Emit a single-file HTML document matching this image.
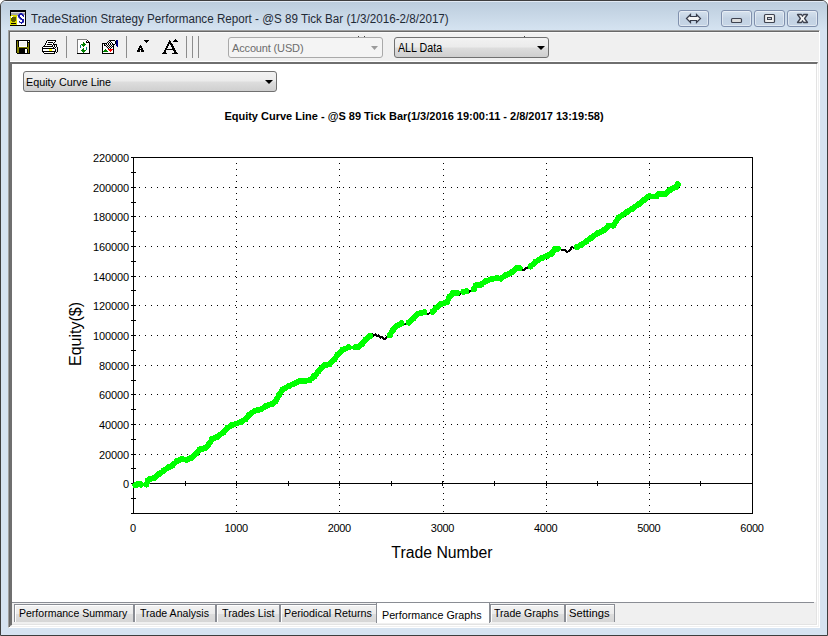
<!DOCTYPE html>
<html><head><meta charset="utf-8"><style>
*{margin:0;padding:0;box-sizing:border-box}
html,body{width:828px;height:636px;overflow:hidden;background:#fff}
body{position:relative;font-family:"Liberation Sans",sans-serif}
.abs{position:absolute}
#frame{position:absolute;left:0;top:0;width:828px;height:636px;background:#d6e3f1;border:1px solid #3e3e3e;border-radius:6px 6px 0 0}
#titlegrad{position:absolute;left:1px;top:1px;width:826px;height:29px;border-radius:5px 5px 0 0;background:linear-gradient(#e2eaf4 0px,#e2eaf4 1px,#bccddd 1px,#d5e3f1 29px)}
#title{position:absolute;left:31px;top:12px;font-size:12px;color:#1f2a36;white-space:nowrap;transform:scaleX(0.97);transform-origin:0 0}
.wb{position:absolute;top:10px;height:17px;width:31px;border:1px solid #8090ad;border-radius:3px;background:linear-gradient(#d6e2ee,#c3d2e3 50%,#c6d5e6);box-shadow:inset 0 0 0 1px rgba(255,255,255,0.45)}
#client{position:absolute;left:8px;top:30px;width:812px;height:598px;background:#f0f0f0;border-top:1px solid #a0a0a0;border-left:1px solid #a0a0a0;border-right:1px solid #fff;border-bottom:1px solid #fff;box-shadow:inset 1px 1px 0 #696969}
#tb{position:absolute;left:10px;top:32px;width:808px;height:30px;background:#f0f0f0;border-bottom:1px solid #fff;border-top:1px solid #fafafa}
.sep{position:absolute;top:36px;width:1px;height:22px;background:#8c8c8c}
.cb{position:absolute;height:21px;border:1px solid #707070;border-radius:3px}
.cb span{position:absolute;white-space:nowrap}
#panel{position:absolute;left:10px;top:62px;width:808px;height:564px;background:#f0f0f0;border-top:2px solid #6f6f6f;border-left:2px solid #6f6f6f;border-right:1px solid #fff;border-bottom:1px solid #fff;box-shadow:inset -1px -1px 0 #e3e3e3}
#content{position:absolute;left:12px;top:64px;width:804px;height:538px;background:#fff}
#tabline{position:absolute;left:12px;top:602px;width:802px;height:1px;background:#8a8d94}
.tab{position:absolute;top:604px;height:18px;border:1px solid #8a8d94;border-bottom:none;background:linear-gradient(#f2f2f2 0,#ebebeb 9px,#dddddd 9px,#d5d5d5 18px);box-shadow:inset 1px 1px 0 #fff}
.tab span{position:absolute;top:2px;font-size:11.5px;color:#000;white-space:nowrap;transform-origin:0 0}
.tab.act{top:602px;height:21px;background:#fff;z-index:2}
.tab.act span{top:6px}
.yl{position:absolute;left:60px;width:69px;text-align:right;font-size:11px;letter-spacing:-0.1px;color:#000;line-height:14px}
.xl{position:absolute;top:521px;width:60px;text-align:center;font-size:11px;letter-spacing:-0.3px;color:#000;line-height:14px}
</style></head><body>
<div id="frame"></div>
<div id="titlegrad"></div>
<svg class="abs" style="left:0;top:0" width="30" height="30"><rect x="10" y="10" width="16" height="1" fill="#000"/><rect x="10" y="11" width="16" height="1" fill="#000"/><rect x="10" y="12" width="1" height="1" fill="#000"/><rect x="11" y="12" width="14" height="1" fill="#dcdcdc"/><rect x="25" y="12" width="1" height="1" fill="#000"/><rect x="10" y="13" width="1" height="1" fill="#000"/><rect x="11" y="13" width="8" height="1" fill="#a4a4a4"/><rect x="19" y="13" width="1" height="1" fill="#7070c8"/><rect x="20" y="13" width="2" height="1" fill="#1818a8"/><rect x="22" y="13" width="1" height="1" fill="#7070c8"/><rect x="23" y="13" width="2" height="1" fill="#a4a4a4"/><rect x="25" y="13" width="1" height="1" fill="#000"/><rect x="10" y="14" width="1" height="1" fill="#000"/><rect x="11" y="14" width="7" height="1" fill="#a4a4a4"/><rect x="18" y="14" width="1" height="1" fill="#7070c8"/><rect x="19" y="14" width="4" height="1" fill="#1818a8"/><rect x="23" y="14" width="1" height="1" fill="#7070c8"/><rect x="24" y="14" width="1" height="1" fill="#a4a4a4"/><rect x="25" y="14" width="1" height="1" fill="#000"/><rect x="10" y="15" width="1" height="1" fill="#000"/><rect x="11" y="15" width="6" height="1" fill="#d8d800"/><rect x="17" y="15" width="1" height="1" fill="#a4a4a4"/><rect x="18" y="15" width="2" height="1" fill="#1818a8"/><rect x="20" y="15" width="2" height="1" fill="#fff"/><rect x="22" y="15" width="2" height="1" fill="#1818a8"/><rect x="24" y="15" width="1" height="1" fill="#fff"/><rect x="25" y="15" width="1" height="1" fill="#000"/><rect x="10" y="16" width="1" height="1" fill="#d8d800"/><rect x="11" y="16" width="2" height="1" fill="#fff"/><rect x="13" y="16" width="4" height="1" fill="#d8d800"/><rect x="17" y="16" width="1" height="1" fill="#fff"/><rect x="18" y="16" width="2" height="1" fill="#1818a8"/><rect x="20" y="16" width="3" height="1" fill="#fff"/><rect x="23" y="16" width="1" height="1" fill="#1818a8"/><rect x="24" y="16" width="1" height="1" fill="#fff"/><rect x="25" y="16" width="1" height="1" fill="#000"/><rect x="10" y="17" width="1" height="1" fill="#d8d800"/><rect x="11" y="17" width="1" height="1" fill="#fff"/><rect x="12" y="17" width="4" height="1" fill="#5a5a00"/><rect x="16" y="17" width="1" height="1" fill="#d8d800"/><rect x="17" y="17" width="1" height="1" fill="#fff"/><rect x="18" y="17" width="1" height="1" fill="#7070c8"/><rect x="19" y="17" width="2" height="1" fill="#1818a8"/><rect x="21" y="17" width="4" height="1" fill="#fff"/><rect x="25" y="17" width="1" height="1" fill="#000"/><rect x="10" y="18" width="1" height="1" fill="#d8d800"/><rect x="11" y="18" width="5" height="1" fill="#5a5a00"/><rect x="16" y="18" width="1" height="1" fill="#d8d800"/><rect x="17" y="18" width="2" height="1" fill="#fff"/><rect x="19" y="18" width="1" height="1" fill="#7070c8"/><rect x="20" y="18" width="2" height="1" fill="#1818a8"/><rect x="22" y="18" width="3" height="1" fill="#fff"/><rect x="25" y="18" width="1" height="1" fill="#000"/><rect x="10" y="19" width="1" height="1" fill="#d8d800"/><rect x="11" y="19" width="5" height="1" fill="#5a5a00"/><rect x="16" y="19" width="1" height="1" fill="#d8d800"/><rect x="17" y="19" width="3" height="1" fill="#fff"/><rect x="20" y="19" width="1" height="1" fill="#7070c8"/><rect x="21" y="19" width="3" height="1" fill="#1818a8"/><rect x="24" y="19" width="1" height="1" fill="#fff"/><rect x="25" y="19" width="1" height="1" fill="#000"/><rect x="10" y="20" width="1" height="1" fill="#d8d800"/><rect x="11" y="20" width="5" height="1" fill="#5a5a00"/><rect x="16" y="20" width="1" height="1" fill="#d8d800"/><rect x="17" y="20" width="5" height="1" fill="#fff"/><rect x="22" y="20" width="2" height="1" fill="#1818a8"/><rect x="24" y="20" width="1" height="1" fill="#fff"/><rect x="25" y="20" width="1" height="1" fill="#000"/><rect x="10" y="21" width="2" height="1" fill="#d8d800"/><rect x="12" y="21" width="3" height="1" fill="#5a5a00"/><rect x="15" y="21" width="2" height="1" fill="#d8d800"/><rect x="17" y="21" width="2" height="1" fill="#fff"/><rect x="19" y="21" width="1" height="1" fill="#1818a8"/><rect x="20" y="21" width="2" height="1" fill="#fff"/><rect x="22" y="21" width="2" height="1" fill="#1818a8"/><rect x="24" y="21" width="1" height="1" fill="#fff"/><rect x="25" y="21" width="1" height="1" fill="#000"/><rect x="10" y="22" width="7" height="1" fill="#d8d800"/><rect x="17" y="22" width="2" height="1" fill="#fff"/><rect x="19" y="22" width="1" height="1" fill="#7070c8"/><rect x="20" y="22" width="3" height="1" fill="#1818a8"/><rect x="23" y="22" width="1" height="1" fill="#7070c8"/><rect x="24" y="22" width="1" height="1" fill="#fff"/><rect x="25" y="22" width="1" height="1" fill="#000"/><rect x="10" y="23" width="1" height="1" fill="#d8d800"/><rect x="11" y="23" width="5" height="1" fill="#000"/><rect x="16" y="23" width="1" height="1" fill="#d8d800"/><rect x="17" y="23" width="4" height="1" fill="#fff"/><rect x="21" y="23" width="1" height="1" fill="#1818a8"/><rect x="22" y="23" width="3" height="1" fill="#fff"/><rect x="25" y="23" width="1" height="1" fill="#000"/><rect x="10" y="24" width="7" height="1" fill="#d8d800"/><rect x="17" y="24" width="8" height="1" fill="#fff"/><rect x="25" y="24" width="1" height="1" fill="#000"/><rect x="10" y="25" width="16" height="1" fill="#000"/></svg>
<div id="title">TradeStation Strategy Performance Report - @S 89 Tick Bar (1/3/2016-2/8/2017)</div>
<div class="wb" style="left:678px"></div>
<div class="wb" style="left:721px"></div>
<div class="wb" style="left:754px"></div>
<div class="wb" style="left:787px"></div>
<svg class="abs" style="left:0;top:0" width="828" height="30">
<polygon points="686.5,18.5 690.5,14.5 690.5,16.5 696.5,16.5 696.5,14.5 700.5,18.5 696.5,22.5 696.5,20.5 690.5,20.5 690.5,22.5" fill="#f4f4f4" stroke="#383d4c" stroke-width="1.2"/>
<rect x="731.5" y="18.5" width="10" height="4" rx="1" fill="#dcdcdc" stroke="#3f4350" stroke-width="1.2"/>
<rect x="764.5" y="14.5" width="10" height="8" rx="1" fill="#efefef" stroke="#3f4350" stroke-width="1.2"/>
<rect x="767.5" y="17.5" width="4" height="2" fill="#c8d0dc" stroke="#3f4350" stroke-width="1"/>
<path d="M797.5 14.5 L801.5 14.5 L802.5 16.3 L803.5 14.5 L807.5 14.5 L804.6 18.5 L807.5 22.5 L803.5 22.5 L802.5 20.7 L801.5 22.5 L797.5 22.5 L800.4 18.5 Z" fill="#f4f4f4" stroke="#3f4350" stroke-width="1.3" stroke-linejoin="round"/>
</svg>
<div id="client"></div>
<div id="tb"></div>
<div class="abs" style="left:358px;top:36px;width:1px;height:1px;background:#444"></div><div class="abs" style="left:364px;top:36px;width:1px;height:1px;background:#444"></div><div class="abs" style="left:524px;top:36px;width:1px;height:1px;background:#444"></div>
<div class="sep" style="left:66px"></div>
<div class="sep" style="left:126px"></div>
<div class="sep" style="left:186px"></div>
<div class="sep" style="left:192px"></div>
<div class="sep" style="left:198px"></div>
<svg class="abs" style="left:0;top:0" width="828" height="62"><rect x="16" y="40" width="14" height="1" fill="#000"/><rect x="16" y="41" width="1" height="1" fill="#000"/><rect x="17" y="41" width="1" height="1" fill="#808000"/><rect x="18" y="41" width="1" height="1" fill="#000"/><rect x="19" y="41" width="8" height="1" fill="#fff"/><rect x="27" y="41" width="1" height="1" fill="#000"/><rect x="28" y="41" width="1" height="1" fill="#fff"/><rect x="29" y="41" width="1" height="1" fill="#000"/><rect x="16" y="42" width="1" height="1" fill="#000"/><rect x="17" y="42" width="1" height="1" fill="#808000"/><rect x="18" y="42" width="1" height="1" fill="#000"/><rect x="19" y="42" width="1" height="1" fill="#fff"/><rect x="20" y="42" width="6" height="1" fill="#eeeeee"/><rect x="26" y="42" width="1" height="1" fill="#fff"/><rect x="27" y="42" width="3" height="1" fill="#000"/><rect x="16" y="43" width="1" height="1" fill="#000"/><rect x="17" y="43" width="1" height="1" fill="#808000"/><rect x="18" y="43" width="1" height="1" fill="#000"/><rect x="19" y="43" width="1" height="1" fill="#fff"/><rect x="20" y="43" width="6" height="1" fill="#eeeeee"/><rect x="26" y="43" width="1" height="1" fill="#fff"/><rect x="27" y="43" width="1" height="1" fill="#000"/><rect x="28" y="43" width="1" height="1" fill="#808000"/><rect x="29" y="43" width="1" height="1" fill="#000"/><rect x="16" y="44" width="1" height="1" fill="#000"/><rect x="17" y="44" width="1" height="1" fill="#808000"/><rect x="18" y="44" width="1" height="1" fill="#000"/><rect x="19" y="44" width="1" height="1" fill="#fff"/><rect x="20" y="44" width="6" height="1" fill="#eeeeee"/><rect x="26" y="44" width="1" height="1" fill="#fff"/><rect x="27" y="44" width="1" height="1" fill="#000"/><rect x="28" y="44" width="1" height="1" fill="#808000"/><rect x="29" y="44" width="1" height="1" fill="#000"/><rect x="16" y="45" width="1" height="1" fill="#000"/><rect x="17" y="45" width="1" height="1" fill="#808000"/><rect x="18" y="45" width="1" height="1" fill="#000"/><rect x="19" y="45" width="1" height="1" fill="#fff"/><rect x="20" y="45" width="6" height="1" fill="#eeeeee"/><rect x="26" y="45" width="1" height="1" fill="#fff"/><rect x="27" y="45" width="1" height="1" fill="#000"/><rect x="28" y="45" width="1" height="1" fill="#808000"/><rect x="29" y="45" width="1" height="1" fill="#000"/><rect x="16" y="46" width="1" height="1" fill="#000"/><rect x="17" y="46" width="1" height="1" fill="#808000"/><rect x="18" y="46" width="1" height="1" fill="#000"/><rect x="19" y="46" width="8" height="1" fill="#fff"/><rect x="27" y="46" width="1" height="1" fill="#000"/><rect x="28" y="46" width="1" height="1" fill="#808000"/><rect x="29" y="46" width="1" height="1" fill="#000"/><rect x="16" y="47" width="1" height="1" fill="#000"/><rect x="17" y="47" width="12" height="1" fill="#808000"/><rect x="29" y="47" width="1" height="1" fill="#000"/><rect x="16" y="48" width="1" height="1" fill="#000"/><rect x="17" y="48" width="2" height="1" fill="#808000"/><rect x="19" y="48" width="8" height="1" fill="#000"/><rect x="27" y="48" width="2" height="1" fill="#808000"/><rect x="29" y="48" width="1" height="1" fill="#000"/><rect x="16" y="49" width="1" height="1" fill="#000"/><rect x="17" y="49" width="2" height="1" fill="#808000"/><rect x="19" y="49" width="6" height="1" fill="#000"/><rect x="25" y="49" width="2" height="1" fill="#fff"/><rect x="27" y="49" width="1" height="1" fill="#000"/><rect x="28" y="49" width="1" height="1" fill="#808000"/><rect x="29" y="49" width="1" height="1" fill="#000"/><rect x="16" y="50" width="1" height="1" fill="#000"/><rect x="17" y="50" width="2" height="1" fill="#808000"/><rect x="19" y="50" width="6" height="1" fill="#000"/><rect x="25" y="50" width="2" height="1" fill="#fff"/><rect x="27" y="50" width="1" height="1" fill="#000"/><rect x="28" y="50" width="1" height="1" fill="#808000"/><rect x="29" y="50" width="1" height="1" fill="#000"/><rect x="16" y="51" width="1" height="1" fill="#000"/><rect x="17" y="51" width="2" height="1" fill="#808000"/><rect x="19" y="51" width="6" height="1" fill="#000"/><rect x="25" y="51" width="2" height="1" fill="#fff"/><rect x="27" y="51" width="1" height="1" fill="#000"/><rect x="28" y="51" width="1" height="1" fill="#808000"/><rect x="29" y="51" width="1" height="1" fill="#000"/><rect x="16" y="52" width="1" height="1" fill="#000"/><rect x="17" y="52" width="2" height="1" fill="#808000"/><rect x="19" y="52" width="6" height="1" fill="#000"/><rect x="25" y="52" width="2" height="1" fill="#fff"/><rect x="27" y="52" width="1" height="1" fill="#000"/><rect x="28" y="52" width="1" height="1" fill="#808000"/><rect x="29" y="52" width="1" height="1" fill="#000"/><rect x="17" y="53" width="13" height="1" fill="#000"/><rect x="47" y="40" width="9" height="1" fill="#000"/><rect x="46" y="41" width="1" height="1" fill="#000"/><rect x="47" y="41" width="8" height="1" fill="#fff"/><rect x="55" y="41" width="1" height="1" fill="#000"/><rect x="46" y="42" width="1" height="1" fill="#000"/><rect x="47" y="42" width="1" height="1" fill="#fff"/><rect x="48" y="42" width="5" height="1" fill="#000"/><rect x="53" y="42" width="1" height="1" fill="#fff"/><rect x="54" y="42" width="1" height="1" fill="#000"/><rect x="45" y="43" width="1" height="1" fill="#000"/><rect x="46" y="43" width="7" height="1" fill="#fff"/><rect x="53" y="43" width="1" height="1" fill="#000"/><rect x="45" y="44" width="1" height="1" fill="#000"/><rect x="46" y="44" width="1" height="1" fill="#fff"/><rect x="47" y="44" width="5" height="1" fill="#000"/><rect x="52" y="44" width="1" height="1" fill="#fff"/><rect x="53" y="44" width="4" height="1" fill="#000"/><rect x="44" y="45" width="1" height="1" fill="#000"/><rect x="45" y="45" width="7" height="1" fill="#fff"/><rect x="52" y="45" width="1" height="1" fill="#000"/><rect x="54" y="45" width="1" height="1" fill="#000"/><rect x="56" y="45" width="1" height="1" fill="#000"/><rect x="43" y="46" width="10" height="1" fill="#000"/><rect x="53" y="46" width="1" height="1" fill="#fff"/><rect x="54" y="46" width="1" height="1" fill="#000"/><rect x="55" y="46" width="1" height="1" fill="#fff"/><rect x="56" y="46" width="1" height="1" fill="#000"/><rect x="42" y="47" width="1" height="1" fill="#000"/><rect x="43" y="47" width="10" height="1" fill="#fff"/><rect x="53" y="47" width="1" height="1" fill="#000"/><rect x="55" y="47" width="1" height="1" fill="#000"/><rect x="57" y="47" width="1" height="1" fill="#000"/><rect x="42" y="48" width="13" height="1" fill="#000"/><rect x="57" y="48" width="1" height="1" fill="#000"/><rect x="42" y="49" width="1" height="1" fill="#000"/><rect x="43" y="49" width="6" height="1" fill="#fff"/><rect x="49" y="49" width="3" height="1" fill="#ffff00"/><rect x="52" y="49" width="3" height="1" fill="#fff"/><rect x="55" y="49" width="1" height="1" fill="#000"/><rect x="57" y="49" width="1" height="1" fill="#000"/><rect x="42" y="50" width="1" height="1" fill="#000"/><rect x="43" y="50" width="6" height="1" fill="#fff"/><rect x="49" y="50" width="3" height="1" fill="#ffff00"/><rect x="52" y="50" width="3" height="1" fill="#fff"/><rect x="55" y="50" width="1" height="1" fill="#000"/><rect x="57" y="50" width="1" height="1" fill="#000"/><rect x="42" y="51" width="14" height="1" fill="#000"/><rect x="57" y="51" width="1" height="1" fill="#000"/><rect x="43" y="52" width="1" height="1" fill="#000"/><rect x="44" y="52" width="10" height="1" fill="#fff"/><rect x="54" y="52" width="1" height="1" fill="#000"/><rect x="56" y="52" width="1" height="1" fill="#000"/><rect x="44" y="53" width="11" height="1" fill="#000"/><rect x="77" y="39" width="10" height="1" fill="#808080"/><rect x="77" y="40" width="1" height="1" fill="#808080"/><rect x="78" y="40" width="9" height="1" fill="#fff"/><rect x="87" y="40" width="1" height="1" fill="#000"/><rect x="77" y="41" width="1" height="1" fill="#808080"/><rect x="78" y="41" width="8" height="1" fill="#fff"/><rect x="86" y="41" width="1" height="1" fill="#000"/><rect x="87" y="41" width="1" height="1" fill="#fff"/><rect x="88" y="41" width="1" height="1" fill="#000"/><rect x="77" y="42" width="1" height="1" fill="#808080"/><rect x="78" y="42" width="5" height="1" fill="#fff"/><rect x="83" y="42" width="1" height="1" fill="#008000"/><rect x="84" y="42" width="2" height="1" fill="#fff"/><rect x="86" y="42" width="4" height="1" fill="#000"/><rect x="77" y="43" width="1" height="1" fill="#808080"/><rect x="78" y="43" width="5" height="1" fill="#fff"/><rect x="83" y="43" width="2" height="1" fill="#008000"/><rect x="85" y="43" width="4" height="1" fill="#fff"/><rect x="89" y="43" width="1" height="1" fill="#000"/><rect x="77" y="44" width="1" height="1" fill="#808080"/><rect x="78" y="44" width="3" height="1" fill="#fff"/><rect x="81" y="44" width="5" height="1" fill="#008000"/><rect x="86" y="44" width="3" height="1" fill="#fff"/><rect x="89" y="44" width="1" height="1" fill="#000"/><rect x="77" y="45" width="1" height="1" fill="#808080"/><rect x="78" y="45" width="2" height="1" fill="#fff"/><rect x="80" y="45" width="1" height="1" fill="#008080"/><rect x="81" y="45" width="1" height="1" fill="#fff"/><rect x="82" y="45" width="3" height="1" fill="#008000"/><rect x="85" y="45" width="4" height="1" fill="#fff"/><rect x="89" y="45" width="1" height="1" fill="#000"/><rect x="77" y="46" width="1" height="1" fill="#808080"/><rect x="78" y="46" width="2" height="1" fill="#fff"/><rect x="80" y="46" width="1" height="1" fill="#008080"/><rect x="81" y="46" width="2" height="1" fill="#fff"/><rect x="83" y="46" width="1" height="1" fill="#008000"/><rect x="84" y="46" width="5" height="1" fill="#fff"/><rect x="89" y="46" width="1" height="1" fill="#000"/><rect x="77" y="47" width="1" height="1" fill="#808080"/><rect x="78" y="47" width="2" height="1" fill="#fff"/><rect x="80" y="47" width="1" height="1" fill="#008080"/><rect x="81" y="47" width="5" height="1" fill="#fff"/><rect x="86" y="47" width="1" height="1" fill="#008080"/><rect x="87" y="47" width="2" height="1" fill="#fff"/><rect x="89" y="47" width="1" height="1" fill="#000"/><rect x="77" y="48" width="1" height="1" fill="#808080"/><rect x="78" y="48" width="5" height="1" fill="#fff"/><rect x="83" y="48" width="1" height="1" fill="#008000"/><rect x="84" y="48" width="2" height="1" fill="#fff"/><rect x="86" y="48" width="1" height="1" fill="#008080"/><rect x="87" y="48" width="2" height="1" fill="#fff"/><rect x="89" y="48" width="1" height="1" fill="#000"/><rect x="77" y="49" width="1" height="1" fill="#808080"/><rect x="78" y="49" width="4" height="1" fill="#fff"/><rect x="82" y="49" width="2" height="1" fill="#008000"/><rect x="84" y="49" width="2" height="1" fill="#fff"/><rect x="86" y="49" width="1" height="1" fill="#008080"/><rect x="87" y="49" width="2" height="1" fill="#fff"/><rect x="89" y="49" width="1" height="1" fill="#000"/><rect x="77" y="50" width="1" height="1" fill="#808080"/><rect x="78" y="50" width="3" height="1" fill="#fff"/><rect x="81" y="50" width="5" height="1" fill="#008000"/><rect x="86" y="50" width="3" height="1" fill="#fff"/><rect x="89" y="50" width="1" height="1" fill="#000"/><rect x="77" y="51" width="1" height="1" fill="#808080"/><rect x="78" y="51" width="4" height="1" fill="#fff"/><rect x="82" y="51" width="3" height="1" fill="#008000"/><rect x="85" y="51" width="4" height="1" fill="#fff"/><rect x="89" y="51" width="1" height="1" fill="#000"/><rect x="77" y="52" width="1" height="1" fill="#808080"/><rect x="78" y="52" width="5" height="1" fill="#fff"/><rect x="83" y="52" width="1" height="1" fill="#008000"/><rect x="84" y="52" width="5" height="1" fill="#fff"/><rect x="89" y="52" width="1" height="1" fill="#000"/><rect x="77" y="53" width="13" height="1" fill="#000"/><rect x="109" y="40" width="6" height="1" fill="#000"/><rect x="116" y="40" width="2" height="1" fill="#000080"/><rect x="108" y="41" width="1" height="1" fill="#000"/><rect x="110" y="41" width="1" height="1" fill="#000"/><rect x="111" y="41" width="4" height="1" fill="#fff"/><rect x="115" y="41" width="1" height="1" fill="#000"/><rect x="116" y="41" width="2" height="1" fill="#000080"/><rect x="107" y="42" width="1" height="1" fill="#000"/><rect x="109" y="42" width="1" height="1" fill="#000"/><rect x="111" y="42" width="1" height="1" fill="#000"/><rect x="112" y="42" width="3" height="1" fill="#fff"/><rect x="115" y="42" width="1" height="1" fill="#000"/><rect x="116" y="42" width="2" height="1" fill="#000080"/><rect x="102" y="43" width="5" height="1" fill="#000"/><rect x="108" y="43" width="1" height="1" fill="#000"/><rect x="110" y="43" width="1" height="1" fill="#000"/><rect x="112" y="43" width="1" height="1" fill="#000"/><rect x="113" y="43" width="2" height="1" fill="#fff"/><rect x="115" y="43" width="1" height="1" fill="#000"/><rect x="116" y="43" width="2" height="1" fill="#000080"/><rect x="102" y="44" width="1" height="1" fill="#000"/><rect x="103" y="44" width="1" height="1" fill="#fff"/><rect x="104" y="44" width="1" height="1" fill="#000"/><rect x="106" y="44" width="1" height="1" fill="#000"/><rect x="108" y="44" width="1" height="1" fill="#000"/><rect x="110" y="44" width="1" height="1" fill="#000"/><rect x="112" y="44" width="3" height="1" fill="#000"/><rect x="116" y="44" width="2" height="1" fill="#000080"/><rect x="102" y="45" width="1" height="1" fill="#000"/><rect x="103" y="45" width="1" height="1" fill="#fff"/><rect x="104" y="45" width="2" height="1" fill="#000"/><rect x="107" y="45" width="1" height="1" fill="#000"/><rect x="109" y="45" width="1" height="1" fill="#000"/><rect x="111" y="45" width="1" height="1" fill="#000"/><rect x="113" y="45" width="1" height="1" fill="#000"/><rect x="116" y="45" width="2" height="1" fill="#000080"/><rect x="102" y="46" width="1" height="1" fill="#000"/><rect x="103" y="46" width="2" height="1" fill="#fff"/><rect x="106" y="46" width="1" height="1" fill="#000"/><rect x="108" y="46" width="1" height="1" fill="#000"/><rect x="110" y="46" width="1" height="1" fill="#000"/><rect x="112" y="46" width="2" height="1" fill="#000"/><rect x="117" y="46" width="1" height="1" fill="#000080"/><rect x="102" y="47" width="1" height="1" fill="#000"/><rect x="103" y="47" width="3" height="1" fill="#fff"/><rect x="107" y="47" width="1" height="1" fill="#000"/><rect x="109" y="47" width="1" height="1" fill="#000"/><rect x="111" y="47" width="1" height="1" fill="#000"/><rect x="112" y="47" width="1" height="1" fill="#fff"/><rect x="113" y="47" width="1" height="1" fill="#000"/><rect x="102" y="48" width="1" height="1" fill="#000"/><rect x="103" y="48" width="4" height="1" fill="#fff"/><rect x="108" y="48" width="1" height="1" fill="#000"/><rect x="110" y="48" width="1" height="1" fill="#000"/><rect x="111" y="48" width="2" height="1" fill="#fff"/><rect x="113" y="48" width="1" height="1" fill="#000"/><rect x="102" y="49" width="1" height="1" fill="#000"/><rect x="103" y="49" width="2" height="1" fill="#fff"/><rect x="105" y="49" width="1" height="1" fill="#008000"/><rect x="106" y="49" width="2" height="1" fill="#fff"/><rect x="108" y="49" width="5" height="1" fill="#ff0000"/><rect x="113" y="49" width="1" height="1" fill="#000"/><rect x="102" y="50" width="1" height="1" fill="#000"/><rect x="103" y="50" width="1" height="1" fill="#fff"/><rect x="104" y="50" width="3" height="1" fill="#008000"/><rect x="107" y="50" width="2" height="1" fill="#fff"/><rect x="109" y="50" width="3" height="1" fill="#ff0000"/><rect x="112" y="50" width="1" height="1" fill="#fff"/><rect x="113" y="50" width="1" height="1" fill="#000"/><rect x="102" y="51" width="1" height="1" fill="#000"/><rect x="103" y="51" width="5" height="1" fill="#008000"/><rect x="108" y="51" width="2" height="1" fill="#fff"/><rect x="110" y="51" width="1" height="1" fill="#ff0000"/><rect x="111" y="51" width="2" height="1" fill="#fff"/><rect x="113" y="51" width="1" height="1" fill="#000"/><rect x="102" y="52" width="1" height="1" fill="#000"/><rect x="103" y="52" width="10" height="1" fill="#fff"/><rect x="113" y="52" width="1" height="1" fill="#000"/><rect x="102" y="53" width="12" height="1" fill="#000"/><rect x="144" y="40" width="5" height="1" fill="#000"/><rect x="145" y="41" width="3" height="1" fill="#000"/><rect x="146" y="42" width="1" height="1" fill="#000"/><rect x="140" y="45" width="1" height="1" fill="#000"/><rect x="139" y="46" width="3" height="1" fill="#000"/><rect x="139" y="47" width="3" height="1" fill="#000"/><rect x="138" y="48" width="2" height="1" fill="#000"/><rect x="140" y="48" width="1" height="1" fill="#fff"/><rect x="141" y="48" width="2" height="1" fill="#000"/><rect x="138" y="49" width="5" height="1" fill="#000"/><rect x="137" y="50" width="3" height="1" fill="#000"/><rect x="141" y="50" width="3" height="1" fill="#000"/><rect x="137" y="51" width="3" height="1" fill="#000"/><rect x="141" y="51" width="3" height="1" fill="#000"/><rect x="175" y="39" width="1" height="1" fill="#000"/><rect x="169" y="40" width="1" height="1" fill="#000"/><rect x="174" y="40" width="3" height="1" fill="#000"/><rect x="169" y="41" width="2" height="1" fill="#000"/><rect x="173" y="41" width="5" height="1" fill="#000"/><rect x="168" y="42" width="3" height="1" fill="#000"/><rect x="168" y="43" width="4" height="1" fill="#000"/><rect x="167" y="44" width="2" height="1" fill="#000"/><rect x="170" y="44" width="3" height="1" fill="#000"/><rect x="167" y="45" width="2" height="1" fill="#000"/><rect x="171" y="45" width="2" height="1" fill="#000"/><rect x="166" y="46" width="2" height="1" fill="#000"/><rect x="171" y="46" width="3" height="1" fill="#000"/><rect x="166" y="47" width="2" height="1" fill="#000"/><rect x="172" y="47" width="2" height="1" fill="#000"/><rect x="165" y="48" width="2" height="1" fill="#000"/><rect x="172" y="48" width="3" height="1" fill="#000"/><rect x="165" y="49" width="10" height="1" fill="#000"/><rect x="164" y="50" width="2" height="1" fill="#000"/><rect x="173" y="50" width="3" height="1" fill="#000"/><rect x="164" y="51" width="2" height="1" fill="#000"/><rect x="174" y="51" width="2" height="1" fill="#000"/><rect x="163" y="52" width="3" height="1" fill="#000"/><rect x="174" y="52" width="3" height="1" fill="#000"/><rect x="162" y="53" width="5" height="1" fill="#000"/><rect x="172" y="53" width="6" height="1" fill="#000"/></svg>
<div class="cb" style="left:228px;top:37px;width:155px;border-color:#a9a9a9;background:#f4f4f4"><span style="left:3px;top:4px;font-size:11px;color:#6d6d6d;letter-spacing:-0.15px">Account (USD)</span>
<svg class="abs" style="left:142px;top:8px" width="8" height="5"><path d="M0 0h7l-3.5 4z" fill="#9b9b9b"/></svg></div>
<div class="cb" style="left:394px;top:37px;width:155px;background:linear-gradient(#f2f2f2 0,#ebebeb 9px,#dddddd 10px,#cfcfcf 19px)"><span style="left:3px;top:3px;font-size:12px;color:#000;transform:scaleX(0.89);transform-origin:0 0">ALL Data</span>
<svg class="abs" style="left:142px;top:8px" width="8" height="5"><path d="M0 0h8l-4 4z" fill="#000"/></svg></div>
<div id="panel"></div>
<div id="content"></div>
<div class="cb" style="left:23px;top:71px;width:254px;background:linear-gradient(#f2f2f2 0,#ebebeb 9px,#dddddd 10px,#cfcfcf 19px)"><span style="left:2px;top:4px;font-size:11px;color:#000;transform:scaleX(0.98);transform-origin:0 0">Equity Curve Line</span>
<svg class="abs" style="left:241px;top:8px" width="8" height="5"><path d="M0 0h8l-4 4z" fill="#000"/></svg></div>
<div class="abs" style="left:0;width:828px;top:110px;text-align:center;font-size:11px;font-weight:bold;color:#000;white-space:nowrap;padding-left:0px">Equity Curve Line - @S 89 Tick Bar(1/3/2016 19:00:11 - 2/8/2017 13:19:58)</div>
<svg class="abs" style="left:0;top:0" width="828" height="636"><path d="M139 187h1v1h-1zM145 187h1v1h-1zM151 187h1v1h-1zM157 187h1v1h-1zM163 187h1v1h-1zM169 187h1v1h-1zM175 187h1v1h-1zM181 187h1v1h-1zM187 187h1v1h-1zM193 187h1v1h-1zM199 187h1v1h-1zM205 187h1v1h-1zM211 187h1v1h-1zM217 187h1v1h-1zM223 187h1v1h-1zM229 187h1v1h-1zM235 187h1v1h-1zM241 187h1v1h-1zM247 187h1v1h-1zM253 187h1v1h-1zM259 187h1v1h-1zM265 187h1v1h-1zM271 187h1v1h-1zM277 187h1v1h-1zM283 187h1v1h-1zM289 187h1v1h-1zM295 187h1v1h-1zM301 187h1v1h-1zM307 187h1v1h-1zM313 187h1v1h-1zM319 187h1v1h-1zM325 187h1v1h-1zM331 187h1v1h-1zM337 187h1v1h-1zM343 187h1v1h-1zM349 187h1v1h-1zM355 187h1v1h-1zM361 187h1v1h-1zM367 187h1v1h-1zM373 187h1v1h-1zM379 187h1v1h-1zM385 187h1v1h-1zM391 187h1v1h-1zM397 187h1v1h-1zM403 187h1v1h-1zM409 187h1v1h-1zM415 187h1v1h-1zM421 187h1v1h-1zM427 187h1v1h-1zM433 187h1v1h-1zM439 187h1v1h-1zM445 187h1v1h-1zM451 187h1v1h-1zM457 187h1v1h-1zM463 187h1v1h-1zM469 187h1v1h-1zM475 187h1v1h-1zM481 187h1v1h-1zM487 187h1v1h-1zM493 187h1v1h-1zM499 187h1v1h-1zM505 187h1v1h-1zM511 187h1v1h-1zM517 187h1v1h-1zM523 187h1v1h-1zM529 187h1v1h-1zM535 187h1v1h-1zM541 187h1v1h-1zM547 187h1v1h-1zM553 187h1v1h-1zM559 187h1v1h-1zM565 187h1v1h-1zM571 187h1v1h-1zM577 187h1v1h-1zM583 187h1v1h-1zM589 187h1v1h-1zM595 187h1v1h-1zM601 187h1v1h-1zM607 187h1v1h-1zM613 187h1v1h-1zM619 187h1v1h-1zM625 187h1v1h-1zM631 187h1v1h-1zM637 187h1v1h-1zM643 187h1v1h-1zM649 187h1v1h-1zM655 187h1v1h-1zM661 187h1v1h-1zM667 187h1v1h-1zM673 187h1v1h-1zM679 187h1v1h-1zM685 187h1v1h-1zM691 187h1v1h-1zM697 187h1v1h-1zM703 187h1v1h-1zM709 187h1v1h-1zM715 187h1v1h-1zM721 187h1v1h-1zM727 187h1v1h-1zM733 187h1v1h-1zM739 187h1v1h-1zM745 187h1v1h-1zM751 187h1v1h-1zM139 216h1v1h-1zM145 216h1v1h-1zM151 216h1v1h-1zM157 216h1v1h-1zM163 216h1v1h-1zM169 216h1v1h-1zM175 216h1v1h-1zM181 216h1v1h-1zM187 216h1v1h-1zM193 216h1v1h-1zM199 216h1v1h-1zM205 216h1v1h-1zM211 216h1v1h-1zM217 216h1v1h-1zM223 216h1v1h-1zM229 216h1v1h-1zM235 216h1v1h-1zM241 216h1v1h-1zM247 216h1v1h-1zM253 216h1v1h-1zM259 216h1v1h-1zM265 216h1v1h-1zM271 216h1v1h-1zM277 216h1v1h-1zM283 216h1v1h-1zM289 216h1v1h-1zM295 216h1v1h-1zM301 216h1v1h-1zM307 216h1v1h-1zM313 216h1v1h-1zM319 216h1v1h-1zM325 216h1v1h-1zM331 216h1v1h-1zM337 216h1v1h-1zM343 216h1v1h-1zM349 216h1v1h-1zM355 216h1v1h-1zM361 216h1v1h-1zM367 216h1v1h-1zM373 216h1v1h-1zM379 216h1v1h-1zM385 216h1v1h-1zM391 216h1v1h-1zM397 216h1v1h-1zM403 216h1v1h-1zM409 216h1v1h-1zM415 216h1v1h-1zM421 216h1v1h-1zM427 216h1v1h-1zM433 216h1v1h-1zM439 216h1v1h-1zM445 216h1v1h-1zM451 216h1v1h-1zM457 216h1v1h-1zM463 216h1v1h-1zM469 216h1v1h-1zM475 216h1v1h-1zM481 216h1v1h-1zM487 216h1v1h-1zM493 216h1v1h-1zM499 216h1v1h-1zM505 216h1v1h-1zM511 216h1v1h-1zM517 216h1v1h-1zM523 216h1v1h-1zM529 216h1v1h-1zM535 216h1v1h-1zM541 216h1v1h-1zM547 216h1v1h-1zM553 216h1v1h-1zM559 216h1v1h-1zM565 216h1v1h-1zM571 216h1v1h-1zM577 216h1v1h-1zM583 216h1v1h-1zM589 216h1v1h-1zM595 216h1v1h-1zM601 216h1v1h-1zM607 216h1v1h-1zM613 216h1v1h-1zM619 216h1v1h-1zM625 216h1v1h-1zM631 216h1v1h-1zM637 216h1v1h-1zM643 216h1v1h-1zM649 216h1v1h-1zM655 216h1v1h-1zM661 216h1v1h-1zM667 216h1v1h-1zM673 216h1v1h-1zM679 216h1v1h-1zM685 216h1v1h-1zM691 216h1v1h-1zM697 216h1v1h-1zM703 216h1v1h-1zM709 216h1v1h-1zM715 216h1v1h-1zM721 216h1v1h-1zM727 216h1v1h-1zM733 216h1v1h-1zM739 216h1v1h-1zM745 216h1v1h-1zM751 216h1v1h-1zM139 246h1v1h-1zM145 246h1v1h-1zM151 246h1v1h-1zM157 246h1v1h-1zM163 246h1v1h-1zM169 246h1v1h-1zM175 246h1v1h-1zM181 246h1v1h-1zM187 246h1v1h-1zM193 246h1v1h-1zM199 246h1v1h-1zM205 246h1v1h-1zM211 246h1v1h-1zM217 246h1v1h-1zM223 246h1v1h-1zM229 246h1v1h-1zM235 246h1v1h-1zM241 246h1v1h-1zM247 246h1v1h-1zM253 246h1v1h-1zM259 246h1v1h-1zM265 246h1v1h-1zM271 246h1v1h-1zM277 246h1v1h-1zM283 246h1v1h-1zM289 246h1v1h-1zM295 246h1v1h-1zM301 246h1v1h-1zM307 246h1v1h-1zM313 246h1v1h-1zM319 246h1v1h-1zM325 246h1v1h-1zM331 246h1v1h-1zM337 246h1v1h-1zM343 246h1v1h-1zM349 246h1v1h-1zM355 246h1v1h-1zM361 246h1v1h-1zM367 246h1v1h-1zM373 246h1v1h-1zM379 246h1v1h-1zM385 246h1v1h-1zM391 246h1v1h-1zM397 246h1v1h-1zM403 246h1v1h-1zM409 246h1v1h-1zM415 246h1v1h-1zM421 246h1v1h-1zM427 246h1v1h-1zM433 246h1v1h-1zM439 246h1v1h-1zM445 246h1v1h-1zM451 246h1v1h-1zM457 246h1v1h-1zM463 246h1v1h-1zM469 246h1v1h-1zM475 246h1v1h-1zM481 246h1v1h-1zM487 246h1v1h-1zM493 246h1v1h-1zM499 246h1v1h-1zM505 246h1v1h-1zM511 246h1v1h-1zM517 246h1v1h-1zM523 246h1v1h-1zM529 246h1v1h-1zM535 246h1v1h-1zM541 246h1v1h-1zM547 246h1v1h-1zM553 246h1v1h-1zM559 246h1v1h-1zM565 246h1v1h-1zM571 246h1v1h-1zM577 246h1v1h-1zM583 246h1v1h-1zM589 246h1v1h-1zM595 246h1v1h-1zM601 246h1v1h-1zM607 246h1v1h-1zM613 246h1v1h-1zM619 246h1v1h-1zM625 246h1v1h-1zM631 246h1v1h-1zM637 246h1v1h-1zM643 246h1v1h-1zM649 246h1v1h-1zM655 246h1v1h-1zM661 246h1v1h-1zM667 246h1v1h-1zM673 246h1v1h-1zM679 246h1v1h-1zM685 246h1v1h-1zM691 246h1v1h-1zM697 246h1v1h-1zM703 246h1v1h-1zM709 246h1v1h-1zM715 246h1v1h-1zM721 246h1v1h-1zM727 246h1v1h-1zM733 246h1v1h-1zM739 246h1v1h-1zM745 246h1v1h-1zM751 246h1v1h-1zM139 276h1v1h-1zM145 276h1v1h-1zM151 276h1v1h-1zM157 276h1v1h-1zM163 276h1v1h-1zM169 276h1v1h-1zM175 276h1v1h-1zM181 276h1v1h-1zM187 276h1v1h-1zM193 276h1v1h-1zM199 276h1v1h-1zM205 276h1v1h-1zM211 276h1v1h-1zM217 276h1v1h-1zM223 276h1v1h-1zM229 276h1v1h-1zM235 276h1v1h-1zM241 276h1v1h-1zM247 276h1v1h-1zM253 276h1v1h-1zM259 276h1v1h-1zM265 276h1v1h-1zM271 276h1v1h-1zM277 276h1v1h-1zM283 276h1v1h-1zM289 276h1v1h-1zM295 276h1v1h-1zM301 276h1v1h-1zM307 276h1v1h-1zM313 276h1v1h-1zM319 276h1v1h-1zM325 276h1v1h-1zM331 276h1v1h-1zM337 276h1v1h-1zM343 276h1v1h-1zM349 276h1v1h-1zM355 276h1v1h-1zM361 276h1v1h-1zM367 276h1v1h-1zM373 276h1v1h-1zM379 276h1v1h-1zM385 276h1v1h-1zM391 276h1v1h-1zM397 276h1v1h-1zM403 276h1v1h-1zM409 276h1v1h-1zM415 276h1v1h-1zM421 276h1v1h-1zM427 276h1v1h-1zM433 276h1v1h-1zM439 276h1v1h-1zM445 276h1v1h-1zM451 276h1v1h-1zM457 276h1v1h-1zM463 276h1v1h-1zM469 276h1v1h-1zM475 276h1v1h-1zM481 276h1v1h-1zM487 276h1v1h-1zM493 276h1v1h-1zM499 276h1v1h-1zM505 276h1v1h-1zM511 276h1v1h-1zM517 276h1v1h-1zM523 276h1v1h-1zM529 276h1v1h-1zM535 276h1v1h-1zM541 276h1v1h-1zM547 276h1v1h-1zM553 276h1v1h-1zM559 276h1v1h-1zM565 276h1v1h-1zM571 276h1v1h-1zM577 276h1v1h-1zM583 276h1v1h-1zM589 276h1v1h-1zM595 276h1v1h-1zM601 276h1v1h-1zM607 276h1v1h-1zM613 276h1v1h-1zM619 276h1v1h-1zM625 276h1v1h-1zM631 276h1v1h-1zM637 276h1v1h-1zM643 276h1v1h-1zM649 276h1v1h-1zM655 276h1v1h-1zM661 276h1v1h-1zM667 276h1v1h-1zM673 276h1v1h-1zM679 276h1v1h-1zM685 276h1v1h-1zM691 276h1v1h-1zM697 276h1v1h-1zM703 276h1v1h-1zM709 276h1v1h-1zM715 276h1v1h-1zM721 276h1v1h-1zM727 276h1v1h-1zM733 276h1v1h-1zM739 276h1v1h-1zM745 276h1v1h-1zM751 276h1v1h-1zM139 305h1v1h-1zM145 305h1v1h-1zM151 305h1v1h-1zM157 305h1v1h-1zM163 305h1v1h-1zM169 305h1v1h-1zM175 305h1v1h-1zM181 305h1v1h-1zM187 305h1v1h-1zM193 305h1v1h-1zM199 305h1v1h-1zM205 305h1v1h-1zM211 305h1v1h-1zM217 305h1v1h-1zM223 305h1v1h-1zM229 305h1v1h-1zM235 305h1v1h-1zM241 305h1v1h-1zM247 305h1v1h-1zM253 305h1v1h-1zM259 305h1v1h-1zM265 305h1v1h-1zM271 305h1v1h-1zM277 305h1v1h-1zM283 305h1v1h-1zM289 305h1v1h-1zM295 305h1v1h-1zM301 305h1v1h-1zM307 305h1v1h-1zM313 305h1v1h-1zM319 305h1v1h-1zM325 305h1v1h-1zM331 305h1v1h-1zM337 305h1v1h-1zM343 305h1v1h-1zM349 305h1v1h-1zM355 305h1v1h-1zM361 305h1v1h-1zM367 305h1v1h-1zM373 305h1v1h-1zM379 305h1v1h-1zM385 305h1v1h-1zM391 305h1v1h-1zM397 305h1v1h-1zM403 305h1v1h-1zM409 305h1v1h-1zM415 305h1v1h-1zM421 305h1v1h-1zM427 305h1v1h-1zM433 305h1v1h-1zM439 305h1v1h-1zM445 305h1v1h-1zM451 305h1v1h-1zM457 305h1v1h-1zM463 305h1v1h-1zM469 305h1v1h-1zM475 305h1v1h-1zM481 305h1v1h-1zM487 305h1v1h-1zM493 305h1v1h-1zM499 305h1v1h-1zM505 305h1v1h-1zM511 305h1v1h-1zM517 305h1v1h-1zM523 305h1v1h-1zM529 305h1v1h-1zM535 305h1v1h-1zM541 305h1v1h-1zM547 305h1v1h-1zM553 305h1v1h-1zM559 305h1v1h-1zM565 305h1v1h-1zM571 305h1v1h-1zM577 305h1v1h-1zM583 305h1v1h-1zM589 305h1v1h-1zM595 305h1v1h-1zM601 305h1v1h-1zM607 305h1v1h-1zM613 305h1v1h-1zM619 305h1v1h-1zM625 305h1v1h-1zM631 305h1v1h-1zM637 305h1v1h-1zM643 305h1v1h-1zM649 305h1v1h-1zM655 305h1v1h-1zM661 305h1v1h-1zM667 305h1v1h-1zM673 305h1v1h-1zM679 305h1v1h-1zM685 305h1v1h-1zM691 305h1v1h-1zM697 305h1v1h-1zM703 305h1v1h-1zM709 305h1v1h-1zM715 305h1v1h-1zM721 305h1v1h-1zM727 305h1v1h-1zM733 305h1v1h-1zM739 305h1v1h-1zM745 305h1v1h-1zM751 305h1v1h-1zM139 335h1v1h-1zM145 335h1v1h-1zM151 335h1v1h-1zM157 335h1v1h-1zM163 335h1v1h-1zM169 335h1v1h-1zM175 335h1v1h-1zM181 335h1v1h-1zM187 335h1v1h-1zM193 335h1v1h-1zM199 335h1v1h-1zM205 335h1v1h-1zM211 335h1v1h-1zM217 335h1v1h-1zM223 335h1v1h-1zM229 335h1v1h-1zM235 335h1v1h-1zM241 335h1v1h-1zM247 335h1v1h-1zM253 335h1v1h-1zM259 335h1v1h-1zM265 335h1v1h-1zM271 335h1v1h-1zM277 335h1v1h-1zM283 335h1v1h-1zM289 335h1v1h-1zM295 335h1v1h-1zM301 335h1v1h-1zM307 335h1v1h-1zM313 335h1v1h-1zM319 335h1v1h-1zM325 335h1v1h-1zM331 335h1v1h-1zM337 335h1v1h-1zM343 335h1v1h-1zM349 335h1v1h-1zM355 335h1v1h-1zM361 335h1v1h-1zM367 335h1v1h-1zM373 335h1v1h-1zM379 335h1v1h-1zM385 335h1v1h-1zM391 335h1v1h-1zM397 335h1v1h-1zM403 335h1v1h-1zM409 335h1v1h-1zM415 335h1v1h-1zM421 335h1v1h-1zM427 335h1v1h-1zM433 335h1v1h-1zM439 335h1v1h-1zM445 335h1v1h-1zM451 335h1v1h-1zM457 335h1v1h-1zM463 335h1v1h-1zM469 335h1v1h-1zM475 335h1v1h-1zM481 335h1v1h-1zM487 335h1v1h-1zM493 335h1v1h-1zM499 335h1v1h-1zM505 335h1v1h-1zM511 335h1v1h-1zM517 335h1v1h-1zM523 335h1v1h-1zM529 335h1v1h-1zM535 335h1v1h-1zM541 335h1v1h-1zM547 335h1v1h-1zM553 335h1v1h-1zM559 335h1v1h-1zM565 335h1v1h-1zM571 335h1v1h-1zM577 335h1v1h-1zM583 335h1v1h-1zM589 335h1v1h-1zM595 335h1v1h-1zM601 335h1v1h-1zM607 335h1v1h-1zM613 335h1v1h-1zM619 335h1v1h-1zM625 335h1v1h-1zM631 335h1v1h-1zM637 335h1v1h-1zM643 335h1v1h-1zM649 335h1v1h-1zM655 335h1v1h-1zM661 335h1v1h-1zM667 335h1v1h-1zM673 335h1v1h-1zM679 335h1v1h-1zM685 335h1v1h-1zM691 335h1v1h-1zM697 335h1v1h-1zM703 335h1v1h-1zM709 335h1v1h-1zM715 335h1v1h-1zM721 335h1v1h-1zM727 335h1v1h-1zM733 335h1v1h-1zM739 335h1v1h-1zM745 335h1v1h-1zM751 335h1v1h-1zM139 365h1v1h-1zM145 365h1v1h-1zM151 365h1v1h-1zM157 365h1v1h-1zM163 365h1v1h-1zM169 365h1v1h-1zM175 365h1v1h-1zM181 365h1v1h-1zM187 365h1v1h-1zM193 365h1v1h-1zM199 365h1v1h-1zM205 365h1v1h-1zM211 365h1v1h-1zM217 365h1v1h-1zM223 365h1v1h-1zM229 365h1v1h-1zM235 365h1v1h-1zM241 365h1v1h-1zM247 365h1v1h-1zM253 365h1v1h-1zM259 365h1v1h-1zM265 365h1v1h-1zM271 365h1v1h-1zM277 365h1v1h-1zM283 365h1v1h-1zM289 365h1v1h-1zM295 365h1v1h-1zM301 365h1v1h-1zM307 365h1v1h-1zM313 365h1v1h-1zM319 365h1v1h-1zM325 365h1v1h-1zM331 365h1v1h-1zM337 365h1v1h-1zM343 365h1v1h-1zM349 365h1v1h-1zM355 365h1v1h-1zM361 365h1v1h-1zM367 365h1v1h-1zM373 365h1v1h-1zM379 365h1v1h-1zM385 365h1v1h-1zM391 365h1v1h-1zM397 365h1v1h-1zM403 365h1v1h-1zM409 365h1v1h-1zM415 365h1v1h-1zM421 365h1v1h-1zM427 365h1v1h-1zM433 365h1v1h-1zM439 365h1v1h-1zM445 365h1v1h-1zM451 365h1v1h-1zM457 365h1v1h-1zM463 365h1v1h-1zM469 365h1v1h-1zM475 365h1v1h-1zM481 365h1v1h-1zM487 365h1v1h-1zM493 365h1v1h-1zM499 365h1v1h-1zM505 365h1v1h-1zM511 365h1v1h-1zM517 365h1v1h-1zM523 365h1v1h-1zM529 365h1v1h-1zM535 365h1v1h-1zM541 365h1v1h-1zM547 365h1v1h-1zM553 365h1v1h-1zM559 365h1v1h-1zM565 365h1v1h-1zM571 365h1v1h-1zM577 365h1v1h-1zM583 365h1v1h-1zM589 365h1v1h-1zM595 365h1v1h-1zM601 365h1v1h-1zM607 365h1v1h-1zM613 365h1v1h-1zM619 365h1v1h-1zM625 365h1v1h-1zM631 365h1v1h-1zM637 365h1v1h-1zM643 365h1v1h-1zM649 365h1v1h-1zM655 365h1v1h-1zM661 365h1v1h-1zM667 365h1v1h-1zM673 365h1v1h-1zM679 365h1v1h-1zM685 365h1v1h-1zM691 365h1v1h-1zM697 365h1v1h-1zM703 365h1v1h-1zM709 365h1v1h-1zM715 365h1v1h-1zM721 365h1v1h-1zM727 365h1v1h-1zM733 365h1v1h-1zM739 365h1v1h-1zM745 365h1v1h-1zM751 365h1v1h-1zM139 394h1v1h-1zM145 394h1v1h-1zM151 394h1v1h-1zM157 394h1v1h-1zM163 394h1v1h-1zM169 394h1v1h-1zM175 394h1v1h-1zM181 394h1v1h-1zM187 394h1v1h-1zM193 394h1v1h-1zM199 394h1v1h-1zM205 394h1v1h-1zM211 394h1v1h-1zM217 394h1v1h-1zM223 394h1v1h-1zM229 394h1v1h-1zM235 394h1v1h-1zM241 394h1v1h-1zM247 394h1v1h-1zM253 394h1v1h-1zM259 394h1v1h-1zM265 394h1v1h-1zM271 394h1v1h-1zM277 394h1v1h-1zM283 394h1v1h-1zM289 394h1v1h-1zM295 394h1v1h-1zM301 394h1v1h-1zM307 394h1v1h-1zM313 394h1v1h-1zM319 394h1v1h-1zM325 394h1v1h-1zM331 394h1v1h-1zM337 394h1v1h-1zM343 394h1v1h-1zM349 394h1v1h-1zM355 394h1v1h-1zM361 394h1v1h-1zM367 394h1v1h-1zM373 394h1v1h-1zM379 394h1v1h-1zM385 394h1v1h-1zM391 394h1v1h-1zM397 394h1v1h-1zM403 394h1v1h-1zM409 394h1v1h-1zM415 394h1v1h-1zM421 394h1v1h-1zM427 394h1v1h-1zM433 394h1v1h-1zM439 394h1v1h-1zM445 394h1v1h-1zM451 394h1v1h-1zM457 394h1v1h-1zM463 394h1v1h-1zM469 394h1v1h-1zM475 394h1v1h-1zM481 394h1v1h-1zM487 394h1v1h-1zM493 394h1v1h-1zM499 394h1v1h-1zM505 394h1v1h-1zM511 394h1v1h-1zM517 394h1v1h-1zM523 394h1v1h-1zM529 394h1v1h-1zM535 394h1v1h-1zM541 394h1v1h-1zM547 394h1v1h-1zM553 394h1v1h-1zM559 394h1v1h-1zM565 394h1v1h-1zM571 394h1v1h-1zM577 394h1v1h-1zM583 394h1v1h-1zM589 394h1v1h-1zM595 394h1v1h-1zM601 394h1v1h-1zM607 394h1v1h-1zM613 394h1v1h-1zM619 394h1v1h-1zM625 394h1v1h-1zM631 394h1v1h-1zM637 394h1v1h-1zM643 394h1v1h-1zM649 394h1v1h-1zM655 394h1v1h-1zM661 394h1v1h-1zM667 394h1v1h-1zM673 394h1v1h-1zM679 394h1v1h-1zM685 394h1v1h-1zM691 394h1v1h-1zM697 394h1v1h-1zM703 394h1v1h-1zM709 394h1v1h-1zM715 394h1v1h-1zM721 394h1v1h-1zM727 394h1v1h-1zM733 394h1v1h-1zM739 394h1v1h-1zM745 394h1v1h-1zM751 394h1v1h-1zM139 424h1v1h-1zM145 424h1v1h-1zM151 424h1v1h-1zM157 424h1v1h-1zM163 424h1v1h-1zM169 424h1v1h-1zM175 424h1v1h-1zM181 424h1v1h-1zM187 424h1v1h-1zM193 424h1v1h-1zM199 424h1v1h-1zM205 424h1v1h-1zM211 424h1v1h-1zM217 424h1v1h-1zM223 424h1v1h-1zM229 424h1v1h-1zM235 424h1v1h-1zM241 424h1v1h-1zM247 424h1v1h-1zM253 424h1v1h-1zM259 424h1v1h-1zM265 424h1v1h-1zM271 424h1v1h-1zM277 424h1v1h-1zM283 424h1v1h-1zM289 424h1v1h-1zM295 424h1v1h-1zM301 424h1v1h-1zM307 424h1v1h-1zM313 424h1v1h-1zM319 424h1v1h-1zM325 424h1v1h-1zM331 424h1v1h-1zM337 424h1v1h-1zM343 424h1v1h-1zM349 424h1v1h-1zM355 424h1v1h-1zM361 424h1v1h-1zM367 424h1v1h-1zM373 424h1v1h-1zM379 424h1v1h-1zM385 424h1v1h-1zM391 424h1v1h-1zM397 424h1v1h-1zM403 424h1v1h-1zM409 424h1v1h-1zM415 424h1v1h-1zM421 424h1v1h-1zM427 424h1v1h-1zM433 424h1v1h-1zM439 424h1v1h-1zM445 424h1v1h-1zM451 424h1v1h-1zM457 424h1v1h-1zM463 424h1v1h-1zM469 424h1v1h-1zM475 424h1v1h-1zM481 424h1v1h-1zM487 424h1v1h-1zM493 424h1v1h-1zM499 424h1v1h-1zM505 424h1v1h-1zM511 424h1v1h-1zM517 424h1v1h-1zM523 424h1v1h-1zM529 424h1v1h-1zM535 424h1v1h-1zM541 424h1v1h-1zM547 424h1v1h-1zM553 424h1v1h-1zM559 424h1v1h-1zM565 424h1v1h-1zM571 424h1v1h-1zM577 424h1v1h-1zM583 424h1v1h-1zM589 424h1v1h-1zM595 424h1v1h-1zM601 424h1v1h-1zM607 424h1v1h-1zM613 424h1v1h-1zM619 424h1v1h-1zM625 424h1v1h-1zM631 424h1v1h-1zM637 424h1v1h-1zM643 424h1v1h-1zM649 424h1v1h-1zM655 424h1v1h-1zM661 424h1v1h-1zM667 424h1v1h-1zM673 424h1v1h-1zM679 424h1v1h-1zM685 424h1v1h-1zM691 424h1v1h-1zM697 424h1v1h-1zM703 424h1v1h-1zM709 424h1v1h-1zM715 424h1v1h-1zM721 424h1v1h-1zM727 424h1v1h-1zM733 424h1v1h-1zM739 424h1v1h-1zM745 424h1v1h-1zM751 424h1v1h-1zM139 454h1v1h-1zM145 454h1v1h-1zM151 454h1v1h-1zM157 454h1v1h-1zM163 454h1v1h-1zM169 454h1v1h-1zM175 454h1v1h-1zM181 454h1v1h-1zM187 454h1v1h-1zM193 454h1v1h-1zM199 454h1v1h-1zM205 454h1v1h-1zM211 454h1v1h-1zM217 454h1v1h-1zM223 454h1v1h-1zM229 454h1v1h-1zM235 454h1v1h-1zM241 454h1v1h-1zM247 454h1v1h-1zM253 454h1v1h-1zM259 454h1v1h-1zM265 454h1v1h-1zM271 454h1v1h-1zM277 454h1v1h-1zM283 454h1v1h-1zM289 454h1v1h-1zM295 454h1v1h-1zM301 454h1v1h-1zM307 454h1v1h-1zM313 454h1v1h-1zM319 454h1v1h-1zM325 454h1v1h-1zM331 454h1v1h-1zM337 454h1v1h-1zM343 454h1v1h-1zM349 454h1v1h-1zM355 454h1v1h-1zM361 454h1v1h-1zM367 454h1v1h-1zM373 454h1v1h-1zM379 454h1v1h-1zM385 454h1v1h-1zM391 454h1v1h-1zM397 454h1v1h-1zM403 454h1v1h-1zM409 454h1v1h-1zM415 454h1v1h-1zM421 454h1v1h-1zM427 454h1v1h-1zM433 454h1v1h-1zM439 454h1v1h-1zM445 454h1v1h-1zM451 454h1v1h-1zM457 454h1v1h-1zM463 454h1v1h-1zM469 454h1v1h-1zM475 454h1v1h-1zM481 454h1v1h-1zM487 454h1v1h-1zM493 454h1v1h-1zM499 454h1v1h-1zM505 454h1v1h-1zM511 454h1v1h-1zM517 454h1v1h-1zM523 454h1v1h-1zM529 454h1v1h-1zM535 454h1v1h-1zM541 454h1v1h-1zM547 454h1v1h-1zM553 454h1v1h-1zM559 454h1v1h-1zM565 454h1v1h-1zM571 454h1v1h-1zM577 454h1v1h-1zM583 454h1v1h-1zM589 454h1v1h-1zM595 454h1v1h-1zM601 454h1v1h-1zM607 454h1v1h-1zM613 454h1v1h-1zM619 454h1v1h-1zM625 454h1v1h-1zM631 454h1v1h-1zM637 454h1v1h-1zM643 454h1v1h-1zM649 454h1v1h-1zM655 454h1v1h-1zM661 454h1v1h-1zM667 454h1v1h-1zM673 454h1v1h-1zM679 454h1v1h-1zM685 454h1v1h-1zM691 454h1v1h-1zM697 454h1v1h-1zM703 454h1v1h-1zM709 454h1v1h-1zM715 454h1v1h-1zM721 454h1v1h-1zM727 454h1v1h-1zM733 454h1v1h-1zM739 454h1v1h-1zM745 454h1v1h-1zM751 454h1v1h-1zM236 163h1v1h-1zM236 169h1v1h-1zM236 175h1v1h-1zM236 181h1v1h-1zM236 187h1v1h-1zM236 193h1v1h-1zM236 199h1v1h-1zM236 205h1v1h-1zM236 211h1v1h-1zM236 217h1v1h-1zM236 223h1v1h-1zM236 229h1v1h-1zM236 235h1v1h-1zM236 241h1v1h-1zM236 247h1v1h-1zM236 253h1v1h-1zM236 259h1v1h-1zM236 265h1v1h-1zM236 271h1v1h-1zM236 277h1v1h-1zM236 283h1v1h-1zM236 289h1v1h-1zM236 295h1v1h-1zM236 301h1v1h-1zM236 307h1v1h-1zM236 313h1v1h-1zM236 319h1v1h-1zM236 325h1v1h-1zM236 331h1v1h-1zM236 337h1v1h-1zM236 343h1v1h-1zM236 349h1v1h-1zM236 355h1v1h-1zM236 361h1v1h-1zM236 367h1v1h-1zM236 373h1v1h-1zM236 379h1v1h-1zM236 385h1v1h-1zM236 391h1v1h-1zM236 397h1v1h-1zM236 403h1v1h-1zM236 409h1v1h-1zM236 415h1v1h-1zM236 421h1v1h-1zM236 427h1v1h-1zM236 433h1v1h-1zM236 439h1v1h-1zM236 445h1v1h-1zM236 451h1v1h-1zM236 457h1v1h-1zM236 463h1v1h-1zM236 469h1v1h-1zM236 475h1v1h-1zM236 481h1v1h-1zM236 487h1v1h-1zM236 493h1v1h-1zM236 499h1v1h-1zM236 505h1v1h-1zM236 511h1v1h-1zM339 163h1v1h-1zM339 169h1v1h-1zM339 175h1v1h-1zM339 181h1v1h-1zM339 187h1v1h-1zM339 193h1v1h-1zM339 199h1v1h-1zM339 205h1v1h-1zM339 211h1v1h-1zM339 217h1v1h-1zM339 223h1v1h-1zM339 229h1v1h-1zM339 235h1v1h-1zM339 241h1v1h-1zM339 247h1v1h-1zM339 253h1v1h-1zM339 259h1v1h-1zM339 265h1v1h-1zM339 271h1v1h-1zM339 277h1v1h-1zM339 283h1v1h-1zM339 289h1v1h-1zM339 295h1v1h-1zM339 301h1v1h-1zM339 307h1v1h-1zM339 313h1v1h-1zM339 319h1v1h-1zM339 325h1v1h-1zM339 331h1v1h-1zM339 337h1v1h-1zM339 343h1v1h-1zM339 349h1v1h-1zM339 355h1v1h-1zM339 361h1v1h-1zM339 367h1v1h-1zM339 373h1v1h-1zM339 379h1v1h-1zM339 385h1v1h-1zM339 391h1v1h-1zM339 397h1v1h-1zM339 403h1v1h-1zM339 409h1v1h-1zM339 415h1v1h-1zM339 421h1v1h-1zM339 427h1v1h-1zM339 433h1v1h-1zM339 439h1v1h-1zM339 445h1v1h-1zM339 451h1v1h-1zM339 457h1v1h-1zM339 463h1v1h-1zM339 469h1v1h-1zM339 475h1v1h-1zM339 481h1v1h-1zM339 487h1v1h-1zM339 493h1v1h-1zM339 499h1v1h-1zM339 505h1v1h-1zM339 511h1v1h-1zM443 163h1v1h-1zM443 169h1v1h-1zM443 175h1v1h-1zM443 181h1v1h-1zM443 187h1v1h-1zM443 193h1v1h-1zM443 199h1v1h-1zM443 205h1v1h-1zM443 211h1v1h-1zM443 217h1v1h-1zM443 223h1v1h-1zM443 229h1v1h-1zM443 235h1v1h-1zM443 241h1v1h-1zM443 247h1v1h-1zM443 253h1v1h-1zM443 259h1v1h-1zM443 265h1v1h-1zM443 271h1v1h-1zM443 277h1v1h-1zM443 283h1v1h-1zM443 289h1v1h-1zM443 295h1v1h-1zM443 301h1v1h-1zM443 307h1v1h-1zM443 313h1v1h-1zM443 319h1v1h-1zM443 325h1v1h-1zM443 331h1v1h-1zM443 337h1v1h-1zM443 343h1v1h-1zM443 349h1v1h-1zM443 355h1v1h-1zM443 361h1v1h-1zM443 367h1v1h-1zM443 373h1v1h-1zM443 379h1v1h-1zM443 385h1v1h-1zM443 391h1v1h-1zM443 397h1v1h-1zM443 403h1v1h-1zM443 409h1v1h-1zM443 415h1v1h-1zM443 421h1v1h-1zM443 427h1v1h-1zM443 433h1v1h-1zM443 439h1v1h-1zM443 445h1v1h-1zM443 451h1v1h-1zM443 457h1v1h-1zM443 463h1v1h-1zM443 469h1v1h-1zM443 475h1v1h-1zM443 481h1v1h-1zM443 487h1v1h-1zM443 493h1v1h-1zM443 499h1v1h-1zM443 505h1v1h-1zM443 511h1v1h-1zM546 163h1v1h-1zM546 169h1v1h-1zM546 175h1v1h-1zM546 181h1v1h-1zM546 187h1v1h-1zM546 193h1v1h-1zM546 199h1v1h-1zM546 205h1v1h-1zM546 211h1v1h-1zM546 217h1v1h-1zM546 223h1v1h-1zM546 229h1v1h-1zM546 235h1v1h-1zM546 241h1v1h-1zM546 247h1v1h-1zM546 253h1v1h-1zM546 259h1v1h-1zM546 265h1v1h-1zM546 271h1v1h-1zM546 277h1v1h-1zM546 283h1v1h-1zM546 289h1v1h-1zM546 295h1v1h-1zM546 301h1v1h-1zM546 307h1v1h-1zM546 313h1v1h-1zM546 319h1v1h-1zM546 325h1v1h-1zM546 331h1v1h-1zM546 337h1v1h-1zM546 343h1v1h-1zM546 349h1v1h-1zM546 355h1v1h-1zM546 361h1v1h-1zM546 367h1v1h-1zM546 373h1v1h-1zM546 379h1v1h-1zM546 385h1v1h-1zM546 391h1v1h-1zM546 397h1v1h-1zM546 403h1v1h-1zM546 409h1v1h-1zM546 415h1v1h-1zM546 421h1v1h-1zM546 427h1v1h-1zM546 433h1v1h-1zM546 439h1v1h-1zM546 445h1v1h-1zM546 451h1v1h-1zM546 457h1v1h-1zM546 463h1v1h-1zM546 469h1v1h-1zM546 475h1v1h-1zM546 481h1v1h-1zM546 487h1v1h-1zM546 493h1v1h-1zM546 499h1v1h-1zM546 505h1v1h-1zM546 511h1v1h-1zM649 163h1v1h-1zM649 169h1v1h-1zM649 175h1v1h-1zM649 181h1v1h-1zM649 187h1v1h-1zM649 193h1v1h-1zM649 199h1v1h-1zM649 205h1v1h-1zM649 211h1v1h-1zM649 217h1v1h-1zM649 223h1v1h-1zM649 229h1v1h-1zM649 235h1v1h-1zM649 241h1v1h-1zM649 247h1v1h-1zM649 253h1v1h-1zM649 259h1v1h-1zM649 265h1v1h-1zM649 271h1v1h-1zM649 277h1v1h-1zM649 283h1v1h-1zM649 289h1v1h-1zM649 295h1v1h-1zM649 301h1v1h-1zM649 307h1v1h-1zM649 313h1v1h-1zM649 319h1v1h-1zM649 325h1v1h-1zM649 331h1v1h-1zM649 337h1v1h-1zM649 343h1v1h-1zM649 349h1v1h-1zM649 355h1v1h-1zM649 361h1v1h-1zM649 367h1v1h-1zM649 373h1v1h-1zM649 379h1v1h-1zM649 385h1v1h-1zM649 391h1v1h-1zM649 397h1v1h-1zM649 403h1v1h-1zM649 409h1v1h-1zM649 415h1v1h-1zM649 421h1v1h-1zM649 427h1v1h-1zM649 433h1v1h-1zM649 439h1v1h-1zM649 445h1v1h-1zM649 451h1v1h-1zM649 457h1v1h-1zM649 463h1v1h-1zM649 469h1v1h-1zM649 475h1v1h-1zM649 481h1v1h-1zM649 487h1v1h-1zM649 493h1v1h-1zM649 499h1v1h-1zM649 505h1v1h-1zM649 511h1v1h-1z" fill="#000"/><rect x="133.5" y="157.5" width="619" height="356" fill="none" stroke="#000" stroke-width="1"/><rect x="133" y="483" width="619" height="1" fill="#000"/><path d="M131 513h5v1h-5zM131 498h5v1h-5zM131 483h5v1h-5zM131 468h5v1h-5zM131 454h5v1h-5zM131 439h5v1h-5zM131 424h5v1h-5zM131 409h5v1h-5zM131 394h5v1h-5zM131 380h5v1h-5zM131 365h5v1h-5zM131 350h5v1h-5zM131 335h5v1h-5zM131 320h5v1h-5zM131 305h5v1h-5zM131 290h5v1h-5zM131 276h5v1h-5zM131 261h5v1h-5zM131 246h5v1h-5zM131 231h5v1h-5zM131 216h5v1h-5zM131 202h5v1h-5zM131 187h5v1h-5zM131 172h5v1h-5zM131 157h5v1h-5zM133 481h1v5h-1zM185 481h1v5h-1zM236 481h1v5h-1zM288 481h1v5h-1zM339 481h1v5h-1zM391 481h1v5h-1zM442 481h1v5h-1zM494 481h1v5h-1zM546 481h1v5h-1zM597 481h1v5h-1zM649 481h1v5h-1zM700 481h1v5h-1zM752 481h1v5h-1z" fill="#000"/><polyline points="135.5,485.1 137.9,484.1 140.9,484.5 143.5,485.1 146.3,484.5 148.1,480.3 150.5,478.8 154.2,477.9 159.0,474.2 163.8,470.6 168.6,467.0 172.3,465.5 177.1,461.0 181.9,459.1 186.8,459.7 191.6,457.9 196.4,453.1 200.0,449.5 204.9,448.3 208.5,444.7 212.1,439.2 217.0,436.8 223.0,432.6 227.8,427.7 232.1,425.1 240.5,422.1 245.4,419.1 249.0,414.8 255.0,410.6 261.0,409.4 265.9,405.8 271.9,404.0 275.6,401.0 279.2,394.9 282.8,389.5 288.8,385.9 294.9,383.4 299.7,381.0 304.5,381.0 309.4,380.4 314.2,376.2 318.4,371.4 324.5,365.4 329.3,364.2 334.2,359.4 337.8,354.6 342.6,349.7 348.6,347.3 351.0,348.5 355.3,347.3 358.0,347.1 362.0,344.1 365.6,339.5 369.8,335.9 372.0,333.6 373.2,335.8 375.6,334.3 376.9,336.1 379.0,335.4 380.5,337.6 382.5,337.1 384.8,339.4 386.5,337.6 387.9,335.8 389.7,335.3 393.3,329.2 397.0,325.6 401.5,323.4 405.0,323.9 408.8,322.6 413.3,318.5 418.1,313.6 424.2,312.4 427.8,314.0 432.6,311.8 436.2,307.6 441.1,304.0 447.1,302.2 449.5,296.7 453.1,293.1 456.8,293.1 459.2,294.9 463.4,291.9 466.3,291.3 469.5,291.6 473.6,289.3 476.1,285.3 480.9,284.7 485.7,281.0 491.8,279.2 496.6,278.0 500.9,278.5 505.7,275.4 511.7,272.4 516.6,268.2 519.6,268.2 523.8,270.0 526.2,268.2 530.5,266.4 535.9,261.6 541.9,257.9 548.0,255.5 551.6,253.7 555.2,248.9 557.6,248.6 560.3,248.7 561.8,250.3 564.3,249.6 567.2,252.0 569.4,250.9 570.8,249.0 572.0,246.9 573.7,248.0 577.0,247.1 581.8,244.6 586.6,241.0 590.6,238.2 597.3,233.5 603.9,230.2 608.6,225.6 613.2,225.6 618.5,217.6 626.5,212.3 631.8,209.0 638.5,204.3 643.8,200.3 649.1,196.3 656.4,196.3 659.0,194.3 665.0,193.7 670.3,189.7 675.7,187.0 677.6,184.4" fill="none" stroke="#000" stroke-width="2" stroke-linejoin="round" shape-rendering="crispEdges"/><polyline points="135.5,485.1 137.9,484.1 140.9,484.5" fill="none" stroke="#00ff00" stroke-width="5.6" stroke-linejoin="round" stroke-linecap="round" shape-rendering="crispEdges"/><circle cx="135.5" cy="485.1" r="3.1" fill="#00ff00" shape-rendering="crispEdges"/><circle cx="137.9" cy="484.1" r="3.1" fill="#00ff00" shape-rendering="crispEdges"/><circle cx="140.9" cy="484.5" r="3.1" fill="#00ff00" shape-rendering="crispEdges"/><polyline points="146.3,484.5 148.1,480.3 150.5,478.8 154.2,477.9 159.0,474.2 163.8,470.6 168.6,467.0 172.3,465.5 177.1,461.0 181.9,459.1 186.8,459.7 191.6,457.9 196.4,453.1 200.0,449.5 204.9,448.3 208.5,444.7 212.1,439.2 217.0,436.8 223.0,432.6 227.8,427.7 232.1,425.1 240.5,422.1 245.4,419.1 249.0,414.8 255.0,410.6 261.0,409.4 265.9,405.8 271.9,404.0 275.6,401.0 279.2,394.9 282.8,389.5 288.8,385.9 294.9,383.4 299.7,381.0 304.5,381.0 309.4,380.4 314.2,376.2 318.4,371.4 324.5,365.4 329.3,364.2 334.2,359.4 337.8,354.6 342.6,349.7 348.6,347.3" fill="none" stroke="#00ff00" stroke-width="5.6" stroke-linejoin="round" stroke-linecap="round" shape-rendering="crispEdges"/><circle cx="146.3" cy="484.5" r="3.1" fill="#00ff00" shape-rendering="crispEdges"/><circle cx="148.1" cy="480.3" r="3.1" fill="#00ff00" shape-rendering="crispEdges"/><circle cx="150.5" cy="478.8" r="3.1" fill="#00ff00" shape-rendering="crispEdges"/><circle cx="154.2" cy="477.9" r="3.1" fill="#00ff00" shape-rendering="crispEdges"/><circle cx="159.0" cy="474.2" r="3.1" fill="#00ff00" shape-rendering="crispEdges"/><circle cx="163.8" cy="470.6" r="3.1" fill="#00ff00" shape-rendering="crispEdges"/><circle cx="168.6" cy="467.0" r="3.1" fill="#00ff00" shape-rendering="crispEdges"/><circle cx="172.3" cy="465.5" r="3.1" fill="#00ff00" shape-rendering="crispEdges"/><circle cx="177.1" cy="461.0" r="3.1" fill="#00ff00" shape-rendering="crispEdges"/><circle cx="181.9" cy="459.1" r="3.1" fill="#00ff00" shape-rendering="crispEdges"/><circle cx="186.8" cy="459.7" r="3.1" fill="#00ff00" shape-rendering="crispEdges"/><circle cx="191.6" cy="457.9" r="3.1" fill="#00ff00" shape-rendering="crispEdges"/><circle cx="196.4" cy="453.1" r="3.1" fill="#00ff00" shape-rendering="crispEdges"/><circle cx="200.0" cy="449.5" r="3.1" fill="#00ff00" shape-rendering="crispEdges"/><circle cx="204.9" cy="448.3" r="3.1" fill="#00ff00" shape-rendering="crispEdges"/><circle cx="208.5" cy="444.7" r="3.1" fill="#00ff00" shape-rendering="crispEdges"/><circle cx="212.1" cy="439.2" r="3.1" fill="#00ff00" shape-rendering="crispEdges"/><circle cx="217.0" cy="436.8" r="3.1" fill="#00ff00" shape-rendering="crispEdges"/><circle cx="223.0" cy="432.6" r="3.1" fill="#00ff00" shape-rendering="crispEdges"/><circle cx="227.8" cy="427.7" r="3.1" fill="#00ff00" shape-rendering="crispEdges"/><circle cx="232.1" cy="425.1" r="3.1" fill="#00ff00" shape-rendering="crispEdges"/><circle cx="240.5" cy="422.1" r="3.1" fill="#00ff00" shape-rendering="crispEdges"/><circle cx="245.4" cy="419.1" r="3.1" fill="#00ff00" shape-rendering="crispEdges"/><circle cx="249.0" cy="414.8" r="3.1" fill="#00ff00" shape-rendering="crispEdges"/><circle cx="255.0" cy="410.6" r="3.1" fill="#00ff00" shape-rendering="crispEdges"/><circle cx="261.0" cy="409.4" r="3.1" fill="#00ff00" shape-rendering="crispEdges"/><circle cx="265.9" cy="405.8" r="3.1" fill="#00ff00" shape-rendering="crispEdges"/><circle cx="271.9" cy="404.0" r="3.1" fill="#00ff00" shape-rendering="crispEdges"/><circle cx="275.6" cy="401.0" r="3.1" fill="#00ff00" shape-rendering="crispEdges"/><circle cx="279.2" cy="394.9" r="3.1" fill="#00ff00" shape-rendering="crispEdges"/><circle cx="282.8" cy="389.5" r="3.1" fill="#00ff00" shape-rendering="crispEdges"/><circle cx="288.8" cy="385.9" r="3.1" fill="#00ff00" shape-rendering="crispEdges"/><circle cx="294.9" cy="383.4" r="3.1" fill="#00ff00" shape-rendering="crispEdges"/><circle cx="299.7" cy="381.0" r="3.1" fill="#00ff00" shape-rendering="crispEdges"/><circle cx="304.5" cy="381.0" r="3.1" fill="#00ff00" shape-rendering="crispEdges"/><circle cx="309.4" cy="380.4" r="3.1" fill="#00ff00" shape-rendering="crispEdges"/><circle cx="314.2" cy="376.2" r="3.1" fill="#00ff00" shape-rendering="crispEdges"/><circle cx="318.4" cy="371.4" r="3.1" fill="#00ff00" shape-rendering="crispEdges"/><circle cx="324.5" cy="365.4" r="3.1" fill="#00ff00" shape-rendering="crispEdges"/><circle cx="329.3" cy="364.2" r="3.1" fill="#00ff00" shape-rendering="crispEdges"/><circle cx="334.2" cy="359.4" r="3.1" fill="#00ff00" shape-rendering="crispEdges"/><circle cx="337.8" cy="354.6" r="3.1" fill="#00ff00" shape-rendering="crispEdges"/><circle cx="342.6" cy="349.7" r="3.1" fill="#00ff00" shape-rendering="crispEdges"/><circle cx="348.6" cy="347.3" r="3.1" fill="#00ff00" shape-rendering="crispEdges"/><polyline points="355.3,347.3 358.0,347.1 362.0,344.1 365.6,339.5 369.8,335.9" fill="none" stroke="#00ff00" stroke-width="5.6" stroke-linejoin="round" stroke-linecap="round" shape-rendering="crispEdges"/><circle cx="355.3" cy="347.3" r="3.1" fill="#00ff00" shape-rendering="crispEdges"/><circle cx="358.0" cy="347.1" r="3.1" fill="#00ff00" shape-rendering="crispEdges"/><circle cx="362.0" cy="344.1" r="3.1" fill="#00ff00" shape-rendering="crispEdges"/><circle cx="365.6" cy="339.5" r="3.1" fill="#00ff00" shape-rendering="crispEdges"/><circle cx="369.8" cy="335.9" r="3.1" fill="#00ff00" shape-rendering="crispEdges"/><polyline points="389.7,335.3 393.3,329.2 397.0,325.6 401.5,323.4" fill="none" stroke="#00ff00" stroke-width="5.6" stroke-linejoin="round" stroke-linecap="round" shape-rendering="crispEdges"/><circle cx="389.7" cy="335.3" r="3.1" fill="#00ff00" shape-rendering="crispEdges"/><circle cx="393.3" cy="329.2" r="3.1" fill="#00ff00" shape-rendering="crispEdges"/><circle cx="397.0" cy="325.6" r="3.1" fill="#00ff00" shape-rendering="crispEdges"/><circle cx="401.5" cy="323.4" r="3.1" fill="#00ff00" shape-rendering="crispEdges"/><polyline points="408.8,322.6 413.3,318.5 418.1,313.6 424.2,312.4" fill="none" stroke="#00ff00" stroke-width="5.6" stroke-linejoin="round" stroke-linecap="round" shape-rendering="crispEdges"/><circle cx="408.8" cy="322.6" r="3.1" fill="#00ff00" shape-rendering="crispEdges"/><circle cx="413.3" cy="318.5" r="3.1" fill="#00ff00" shape-rendering="crispEdges"/><circle cx="418.1" cy="313.6" r="3.1" fill="#00ff00" shape-rendering="crispEdges"/><circle cx="424.2" cy="312.4" r="3.1" fill="#00ff00" shape-rendering="crispEdges"/><polyline points="432.6,311.8 436.2,307.6 441.1,304.0 447.1,302.2 449.5,296.7 453.1,293.1 456.8,293.1" fill="none" stroke="#00ff00" stroke-width="5.6" stroke-linejoin="round" stroke-linecap="round" shape-rendering="crispEdges"/><circle cx="432.6" cy="311.8" r="3.1" fill="#00ff00" shape-rendering="crispEdges"/><circle cx="436.2" cy="307.6" r="3.1" fill="#00ff00" shape-rendering="crispEdges"/><circle cx="441.1" cy="304.0" r="3.1" fill="#00ff00" shape-rendering="crispEdges"/><circle cx="447.1" cy="302.2" r="3.1" fill="#00ff00" shape-rendering="crispEdges"/><circle cx="449.5" cy="296.7" r="3.1" fill="#00ff00" shape-rendering="crispEdges"/><circle cx="453.1" cy="293.1" r="3.1" fill="#00ff00" shape-rendering="crispEdges"/><circle cx="456.8" cy="293.1" r="3.1" fill="#00ff00" shape-rendering="crispEdges"/><polyline points="463.4,291.9 466.3,291.3" fill="none" stroke="#00ff00" stroke-width="5.6" stroke-linejoin="round" stroke-linecap="round" shape-rendering="crispEdges"/><circle cx="463.4" cy="291.9" r="3.1" fill="#00ff00" shape-rendering="crispEdges"/><circle cx="466.3" cy="291.3" r="3.1" fill="#00ff00" shape-rendering="crispEdges"/><polyline points="473.6,289.3 476.1,285.3 480.9,284.7 485.7,281.0 491.8,279.2 496.6,278.0 500.9,278.5 505.7,275.4 511.7,272.4 516.6,268.2 519.6,268.2" fill="none" stroke="#00ff00" stroke-width="5.6" stroke-linejoin="round" stroke-linecap="round" shape-rendering="crispEdges"/><circle cx="473.6" cy="289.3" r="3.1" fill="#00ff00" shape-rendering="crispEdges"/><circle cx="476.1" cy="285.3" r="3.1" fill="#00ff00" shape-rendering="crispEdges"/><circle cx="480.9" cy="284.7" r="3.1" fill="#00ff00" shape-rendering="crispEdges"/><circle cx="485.7" cy="281.0" r="3.1" fill="#00ff00" shape-rendering="crispEdges"/><circle cx="491.8" cy="279.2" r="3.1" fill="#00ff00" shape-rendering="crispEdges"/><circle cx="496.6" cy="278.0" r="3.1" fill="#00ff00" shape-rendering="crispEdges"/><circle cx="500.9" cy="278.5" r="3.1" fill="#00ff00" shape-rendering="crispEdges"/><circle cx="505.7" cy="275.4" r="3.1" fill="#00ff00" shape-rendering="crispEdges"/><circle cx="511.7" cy="272.4" r="3.1" fill="#00ff00" shape-rendering="crispEdges"/><circle cx="516.6" cy="268.2" r="3.1" fill="#00ff00" shape-rendering="crispEdges"/><circle cx="519.6" cy="268.2" r="3.1" fill="#00ff00" shape-rendering="crispEdges"/><polyline points="530.5,266.4 535.9,261.6 541.9,257.9 548.0,255.5 551.6,253.7 555.2,248.9 557.6,248.6" fill="none" stroke="#00ff00" stroke-width="5.6" stroke-linejoin="round" stroke-linecap="round" shape-rendering="crispEdges"/><circle cx="530.5" cy="266.4" r="3.1" fill="#00ff00" shape-rendering="crispEdges"/><circle cx="535.9" cy="261.6" r="3.1" fill="#00ff00" shape-rendering="crispEdges"/><circle cx="541.9" cy="257.9" r="3.1" fill="#00ff00" shape-rendering="crispEdges"/><circle cx="548.0" cy="255.5" r="3.1" fill="#00ff00" shape-rendering="crispEdges"/><circle cx="551.6" cy="253.7" r="3.1" fill="#00ff00" shape-rendering="crispEdges"/><circle cx="555.2" cy="248.9" r="3.1" fill="#00ff00" shape-rendering="crispEdges"/><circle cx="557.6" cy="248.6" r="3.1" fill="#00ff00" shape-rendering="crispEdges"/><polyline points="577.0,247.1 581.8,244.6 586.6,241.0 590.6,238.2 597.3,233.5 603.9,230.2 608.6,225.6 613.2,225.6 618.5,217.6 626.5,212.3 631.8,209.0 638.5,204.3 643.8,200.3 649.1,196.3 656.4,196.3 659.0,194.3 665.0,193.7 670.3,189.7 675.7,187.0 677.6,184.4" fill="none" stroke="#00ff00" stroke-width="5.6" stroke-linejoin="round" stroke-linecap="round" shape-rendering="crispEdges"/><circle cx="577.0" cy="247.1" r="3.1" fill="#00ff00" shape-rendering="crispEdges"/><circle cx="581.8" cy="244.6" r="3.1" fill="#00ff00" shape-rendering="crispEdges"/><circle cx="586.6" cy="241.0" r="3.1" fill="#00ff00" shape-rendering="crispEdges"/><circle cx="590.6" cy="238.2" r="3.1" fill="#00ff00" shape-rendering="crispEdges"/><circle cx="597.3" cy="233.5" r="3.1" fill="#00ff00" shape-rendering="crispEdges"/><circle cx="603.9" cy="230.2" r="3.1" fill="#00ff00" shape-rendering="crispEdges"/><circle cx="608.6" cy="225.6" r="3.1" fill="#00ff00" shape-rendering="crispEdges"/><circle cx="613.2" cy="225.6" r="3.1" fill="#00ff00" shape-rendering="crispEdges"/><circle cx="618.5" cy="217.6" r="3.1" fill="#00ff00" shape-rendering="crispEdges"/><circle cx="626.5" cy="212.3" r="3.1" fill="#00ff00" shape-rendering="crispEdges"/><circle cx="631.8" cy="209.0" r="3.1" fill="#00ff00" shape-rendering="crispEdges"/><circle cx="638.5" cy="204.3" r="3.1" fill="#00ff00" shape-rendering="crispEdges"/><circle cx="643.8" cy="200.3" r="3.1" fill="#00ff00" shape-rendering="crispEdges"/><circle cx="649.1" cy="196.3" r="3.1" fill="#00ff00" shape-rendering="crispEdges"/><circle cx="656.4" cy="196.3" r="3.1" fill="#00ff00" shape-rendering="crispEdges"/><circle cx="659.0" cy="194.3" r="3.1" fill="#00ff00" shape-rendering="crispEdges"/><circle cx="665.0" cy="193.7" r="3.1" fill="#00ff00" shape-rendering="crispEdges"/><circle cx="670.3" cy="189.7" r="3.1" fill="#00ff00" shape-rendering="crispEdges"/><circle cx="675.7" cy="187.0" r="3.1" fill="#00ff00" shape-rendering="crispEdges"/><circle cx="677.6" cy="184.4" r="3.1" fill="#00ff00" shape-rendering="crispEdges"/></svg>
<div class="yl" style="top:477px">0</div><div class="yl" style="top:448px">20000</div><div class="yl" style="top:418px">40000</div><div class="yl" style="top:388px">60000</div><div class="yl" style="top:359px">80000</div><div class="yl" style="top:329px">100000</div><div class="yl" style="top:299px">120000</div><div class="yl" style="top:270px">140000</div><div class="yl" style="top:240px">160000</div><div class="yl" style="top:210px">180000</div><div class="yl" style="top:181px">200000</div><div class="yl" style="top:151px">220000</div>
<div class="xl" style="left:103.0px">0</div><div class="xl" style="left:206.2px">1000</div><div class="xl" style="left:309.3px">2000</div><div class="xl" style="left:412.5px">3000</div><div class="xl" style="left:515.7px">4000</div><div class="xl" style="left:618.8px">5000</div><div class="xl" style="left:722.0px">6000</div>
<div class="abs" style="left:384px;top:544px;width:116px;text-align:center;font-size:15.8px;color:#000;white-space:nowrap">Trade Number</div>
<div class="abs" style="left:44px;top:325px;width:64px;text-align:center;font-size:16px;color:#000;white-space:nowrap;transform:rotate(-90deg)">Equity($)</div>
<div id="tabline"></div>
<div class="tab" style="left:14px;width:120px"><span style="left:4px;transform:scaleX(0.915)">Performance Summary</span></div><div class="tab" style="left:134px;width:82px"><span style="left:5px;transform:scaleX(0.920)">Trade Analysis</span></div><div class="tab" style="left:216px;width:64px"><span style="left:5px;transform:scaleX(0.929)">Trades List</span></div><div class="tab" style="left:280px;width:97px"><span style="left:3px;transform:scaleX(0.935)">Periodical Returns</span></div><div class="tab act" style="left:376px;width:114px"><span style="left:5px;transform:scaleX(0.933)">Performance Graphs</span></div><div class="tab" style="left:490px;width:75px"><span style="left:3px;transform:scaleX(0.914)">Trade Graphs</span></div><div class="tab" style="left:565px;width:50px"><span style="left:3px;transform:scaleX(0.975)">Settings</span></div>
</body></html>
